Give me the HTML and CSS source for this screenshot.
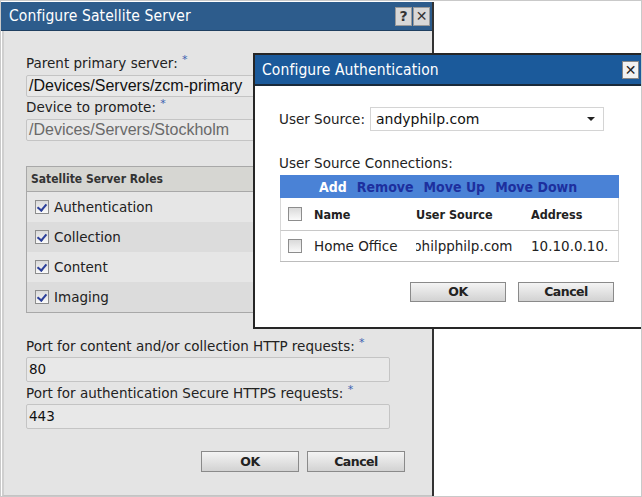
FILE: index.html
```html
<!DOCTYPE html>
<html>
<head>
<meta charset="utf-8">
<link rel="stylesheet" href="styles.css">
</head>
<body>
<div class="frame">
  <div class="sat">
    <div class="sat-title">
      <span class="title-text">Configure Satellite Server</span>
      <span class="tbtns"><span class="tbtn">?</span><span class="tbtn x">✕</span></span>
    </div>
    <div class="sat-body">
      <div class="field">
        <div class="lbl">Parent primary server: <span class="req">*</span></div>
        <div class="inp">/Devices/Servers/zcm-primary</div>
      </div>
      <div class="field">
        <div class="lbl">Device to promote: <span class="req">*</span></div>
        <div class="inp dim">/Devices/Servers/Stockholm</div>
      </div>
      <div class="roles">
        <div class="roles-head">Satellite Server Roles</div>
        <div class="role"><span class="cb checked"></span>Authentication</div>
        <div class="role alt"><span class="cb checked"></span>Collection</div>
        <div class="role"><span class="cb checked"></span>Content</div>
        <div class="role alt"><span class="cb checked"></span>Imaging</div>
      </div>
      <div class="field port">
        <div class="lbl">Port for content and/or collection HTTP requests: <span class="req">*</span></div>
        <div class="inp num">80</div>
      </div>
      <div class="field">
        <div class="lbl">Port for authentication Secure HTTPS requests: <span class="req">*</span></div>
        <div class="inp num">443</div>
      </div>
      <div class="btnrow sat-btns">
        <span class="btn">OK</span><span class="btn">Cancel</span>
      </div>
    </div>
  </div>

  <div class="auth">
    <div class="auth-title">
      <span class="title-text">Configure Authentication</span>
      <span class="closebtn">✕</span>
    </div>
    <div class="auth-body">
      <div class="us-row">
        <span class="us-lbl">User Source:</span>
        <div class="select"><span>andyphilp.com</span><span class="caret"></span></div>
      </div>
      <div class="usc-lbl">User Source Connections:</div>
      <div class="grid">
        <div class="toolbar">
          <span class="tb-add">Add</span><span class="tb-link">Remove</span><span class="tb-link">Move Up</span><span class="tb-link">Move Down</span>
        </div>
        <div class="grow ghead">
          <span class="c0"><span class="cb"></span></span><span class="c1">Name</span><span class="c2">User Source</span><span class="c3">Address</span>
        </div>
        <div class="grow gdata">
          <span class="c0"><span class="cb"></span></span><span class="c1">Home Office</span><span class="c2 clip"><span>philpphilp.com</span></span><span class="c3 clip"><span>10.10.0.10.</span></span>
        </div>
      </div>
      <div class="btnrow auth-btns">
        <span class="btn">OK</span><span class="btn">Cancel</span>
      </div>
    </div>
  </div>
</div>
</body>
</html>
```

FILE: styles.css
```css
html, body {
  margin: 0;
  padding: 0;
  background: #fff;
}
.frame {
  position: relative;
  width: 642px;
  height: 497px;
  box-sizing: border-box;
  border: 1px solid #c9c9c9;
  overflow: hidden;
  font-family: "DejaVu Sans", sans-serif;
  color: #222;
}
.sat {
  width: 433px;
  height: 494px;
  margin-top: 1px;
  box-sizing: border-box;
  border-right: 2px solid #333;
  display: flex;
  flex-direction: column;
}
.sat-title {
  height: 28px;
  background: #2d5c8c;
  border-bottom: 1px solid #1f3f60;
  display: flex;
  align-items: center;
  justify-content: space-between;
  padding: 0 2px 0 8px;
  color: #fff;
}
.title-text {
  font-family: "DejaVu Sans Condensed", "DejaVu Sans", sans-serif;
  font-size: 15.5px;
  letter-spacing: 0.1px;
}
.tbtns {
  display: flex;
  gap: 1px;
}
.tbtn {
  width: 15px;
  height: 17px;
  background: #d8d8d8;
  border: 1px solid #9a9a9a;
  color: #333;
  font-weight: bold;
  font-size: 14px;
  line-height: 17px;
  text-align: center;
}
.tbtn.x {
  font-weight: normal;
  font-size: 14px;
}
.sat-body {
  flex: 1;
  background: #e4e4e4;
  border-left: 2px solid #cfcfcf;
  margin-left: 1px;
  border-bottom: 1px solid #c4c4c4;
  padding: 22px 42px 0 22px;
}
.field {
  display: flex;
  flex-direction: column;
}
.lbl {
  font-size: 13.5px;
  height: 20px;
  line-height: 20px;
  white-space: nowrap;
}
.req {
  color: #3b63b0;
  font-size: 11px;
  vertical-align: top;
  line-height: 14px;
}
.inp {
  height: 20px;
  margin-top: 2px;
  border: 1px solid #c4c4c4;
  border-radius: 2px;
  background: #e8e8e8;
  font-family: "Liberation Sans", Arial, sans-serif;
  font-size: 16px;
  line-height: 20px;
  padding-left: 2px;
  color: #111;
  white-space: nowrap;
  overflow: hidden;
}
.inp.dim {
  color: #6a6a6a;
}
.inp.num {
  font-family: "DejaVu Sans", sans-serif;
  font-size: 13.5px;
  height: 23px;
  line-height: 23px;
  margin-top: 1px;
  margin-bottom: 1px;
}
.roles {
  margin-top: 25px;
  border: 1px solid #a8a8a8;
}
.roles-head {
  height: 24px;
  line-height: 24px;
  background: #d6d6d2;
  border-bottom: 1px solid #a8a8a8;
  font-family: "DejaVu Sans Condensed", "DejaVu Sans", sans-serif;
  font-size: 12px;
  font-weight: bold;
  padding-left: 4px;
  color: #333;
}
.role {
  height: 30px;
  display: flex;
  align-items: center;
  font-size: 13.5px;
  padding-left: 8px;
  background: #e6e6e6;
  color: #222;
}
.role.alt {
  background: #dcdcdc;
}
.cb {
  display: inline-block;
  width: 12px;
  height: 12px;
  border: 1px solid #8d8d8d;
  background: linear-gradient(#dadada, #fafafa);
  margin-right: 5px;
  position: relative;
  box-sizing: content-box;
}
.cb.checked::after {
  content: "";
  position: absolute;
  left: 3px;
  top: 1px;
  width: 4px;
  height: 7px;
  border: solid #2b3f9a;
  border-width: 0 2px 2px 0;
  transform: rotate(40deg);
}
.port {
  margin-top: 23px;
}
.btnrow {
  display: flex;
  gap: 8px;
  justify-content: flex-end;
}
.sat-btns {
  margin-top: 21px;
  margin-right: -15px;
}
.btn {
  width: 96px;
  height: 19px;
  border: 1px solid #8a8a8a;
  background: linear-gradient(#f4f4f4, #d2d2d2);
  font-weight: bold;
  font-size: 12.5px;
  line-height: 19px;
  text-align: center;
  color: #222;
  letter-spacing: -0.5px;
}

/* Auth dialog overlay window */
.auth {
  position: absolute;
  left: 252px;
  top: 52px;
  width: 389px;
  height: 276px;
  box-sizing: border-box;
  border: 2px solid #262626;
  border-right: 1px solid #bdbdbd;
  background: #fff;
  display: flex;
  flex-direction: column;
}
.auth-title {
  height: 29px;
  background: #1b5a9b;
  border-bottom: 2px solid #1a2a3a;
  display: flex;
  align-items: center;
  justify-content: space-between;
  padding: 0 2px 0 7px;
  color: #fff;
}
.closebtn {
  width: 15px;
  height: 16px;
  background: #f2f2f2;
  border: 1px solid #888;
  color: #222;
  font-size: 14px;
  line-height: 16px;
  text-align: center;
  font-weight: bold;
}
.auth-body {
  flex: 1;
  padding: 21px 21px 0 24px;
}
.us-row {
  display: flex;
  align-items: center;
  gap: 5px;
}
.us-lbl {
  font-size: 13.5px;
}
.select {
  width: 219px;
  height: 22px;
  border: 1px solid #d4d4d4;
  display: flex;
  align-items: center;
  justify-content: space-between;
  padding: 0 8px 0 5px;
  font-size: 14px;
  color: #111;
}
.caret {
  width: 0;
  height: 0;
  border-left: 4px solid transparent;
  border-right: 4px solid transparent;
  border-top: 4px solid #222;
}
.usc-lbl {
  font-size: 13.5px;
  margin-top: 22px;
  height: 20px;
  line-height: 20px;
}
.grid {
  width: 339px;
  margin-top: 2px;
  margin-left: 1px;
  border-bottom: 1px solid #bcbcbc;
}
.toolbar {
  height: 23px;
  background: #4a82d6;
  display: flex;
  align-items: center;
  padding-left: 39px;
  gap: 10px;
  font-family: "DejaVu Sans Condensed", "DejaVu Sans", sans-serif;
  font-size: 14px;
  font-weight: bold;
}
.tb-add {
  color: #fff;
}
.tb-link {
  color: #1d2f9e;
}
.grow {
  height: 30px;
  display: flex;
  align-items: center;
  border-left: 1px solid #d8d8d8;
  border-right: 1px solid #d8d8d8;
}
.ghead {
  height: 32px;
  border-bottom: 1px solid #c8c8c8;
  font-family: "DejaVu Sans Condensed", "DejaVu Sans", sans-serif;
  font-size: 12.5px;
  font-weight: bold;
  color: #222;
}
.gdata {
  font-size: 13.5px;
}
.c0 {
  width: 33px;
  padding-left: 7px;
  box-sizing: border-box;
  display: flex;
}
.c1 {
  width: 102px;
}
.c2 {
  width: 115px;
}
.c3 {
  flex: 1;
}
.clip {
  overflow: hidden;
  white-space: nowrap;
}
.c2.clip span {
  display: inline-block;
  margin-left: -3px;
}
.auth-btns {
  margin-top: 20px;
  padding-right: 6px;
  gap: 12px;
}
.auth-btns .btn {
  width: 94px;
  height: 18px;
  line-height: 18px;
}
```
